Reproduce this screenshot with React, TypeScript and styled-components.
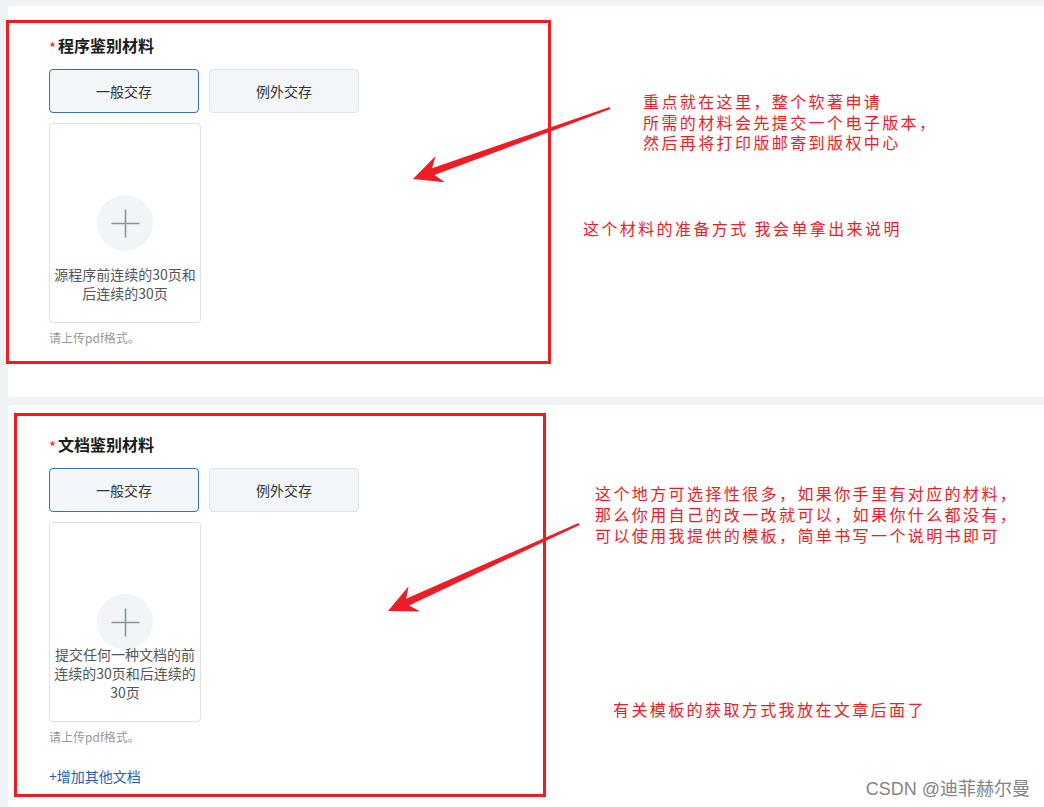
import styled, { createGlobalStyle } from "styled-components"

const RED = "#ee1c25"

const GlobalStyle = createGlobalStyle`
  html, body {
    margin: 0;
    padding: 0;
  }
  body {
    background: #f0f3f6;
    font-family: "Noto Sans CJK SC", "Noto Sans", sans-serif;
  }
  * {
    box-sizing: border-box;
  }
`

type Point = [number, number]

// tapered "screenshot tool" arrow, from tail to tip
const arrowPoints = (tail: Point, tip: Point) => {
  const dx = tip[0] - tail[0]
  const dy = tip[1] - tail[1]
  const len = Math.hypot(dx, dy)
  const d: Point = [dx / len, dy / len]
  const n: Point = [-d[1], d[0]]
  const at = (back: number, side: number): Point => [
    tip[0] - back * d[0] + side * n[0],
    tip[1] - back * d[1] + side * n[1],
  ]
  const pts: Point[] = [
    [tail[0] + 1.2 * n[0], tail[1] + 1.2 * n[1]],
    at(21.5, 3.6),
    at(29, 13.9),
    tip,
    at(29, -13.9),
    at(21.5, -3.6),
    [tail[0] - 1.2 * n[0], tail[1] - 1.2 * n[1]],
  ]
  return pts.map((p) => p.map((v) => v.toFixed(1)).join(",")).join(" ")
}

const App = () => {
  return (
    <>
      <GlobalStyle />
      <Page>
        <Panel $height={391}>
          <Highlight $top={14} $left={-2} $width={545} $height={344} $padTop={11} $padLeft={40}>
            <Field>
              <Title>
                <Required>*</Required>程序鉴别材料
              </Title>
              <Choices>
                <Choice $active>一般交存</Choice>
                <Choice>例外交存</Choice>
              </Choices>
              <Uploader>
                <AddCircle>
                  <PlusIcon />
                </AddCircle>
                <Caption>{"源程序前连续的30页和\n后连续的30页"}</Caption>
              </Uploader>
              <Hint>请上传pdf格式。</Hint>
            </Field>
          </Highlight>
          <Notes>
            <Note $top={85} $left={92} $lineHeight={20.5}>
              {"重点就在这里，整个软著申请\n所需的材料会先提交一个电子版本，\n然后再将打印版邮寄到版权中心"}
            </Note>
            <Note $top={65.5} $left={32} $lineHeight={20.5}>
              这个材料的准备方式 我会单拿出来说明
            </Note>
          </Notes>
        </Panel>

        <Panel $height={402}>
          <Highlight $top={8} $left={6} $width={532} $height={384} $padTop={17} $padLeft={32}>
            <Field>
              <Title>
                <Required>*</Required>文档鉴别材料
              </Title>
              <Choices>
                <Choice $active>一般交存</Choice>
                <Choice>例外交存</Choice>
              </Choices>
              <Uploader>
                <AddCircle>
                  <PlusIcon />
                </AddCircle>
                <Caption>{"提交任何一种文档的前\n连续的30页和后连续的\n30页"}</Caption>
              </Uploader>
              <Hint>请上传pdf格式。</Hint>
              <AddLink>+增加其他文档</AddLink>
            </Field>
          </Highlight>
          <Notes>
            <Note $top={77.5} $left={49} $lineHeight={21}>
              {"这个地方可选择性很多，如果你手里有对应的材料，\n那么你用自己的改一改就可以，如果你什么都没有，\n可以使用我提供的模板，简单书写一个说明书即可"}
            </Note>
            <Note $top={153.5} $left={67} $lineHeight={21}>
              有关模板的获取方式我放在文章后面了
            </Note>
          </Notes>
        </Panel>

        <Arrows viewBox="0 0 1044 807" width={1044} height={807}>
          <polygon points={arrowPoints([610, 108], [413, 179])} fill={RED} />
          <polygon points={arrowPoints([579, 524], [388, 611])} fill={RED} />
        </Arrows>

        <Watermark>CSDN @迪菲赫尔曼</Watermark>
      </Page>
    </>
  )
}

const PlusIcon = () => (
  <svg width="29" height="29" viewBox="0 0 29 29">
    <path d="M14.5 0.5v28M0.5 14.5h28" stroke="#8794a8" strokeWidth="1.6" fill="none" />
  </svg>
)

const Page = styled.div`
  position: relative;
  display: flex;
  flex-direction: column;
  gap: 8px;
  width: 1044px;
  height: 807px;
  padding: 6px 0 0 8px;
  overflow: hidden;
  background: #f0f3f6;
`

const Panel = styled.section<{ $height: number }>`
  display: flex;
  align-items: flex-start;
  flex-shrink: 0;
  height: ${(p) => p.$height}px;
  background: #fff;
  border-radius: 4px 0 0 4px;
`

const Highlight = styled.div<{
  $top: number
  $left: number
  $width: number
  $height: number
  $padTop: number
  $padLeft: number
}>`
  flex-shrink: 0;
  width: ${(p) => p.$width}px;
  height: ${(p) => p.$height}px;
  margin: ${(p) => p.$top}px 0 0 ${(p) => p.$left}px;
  padding: ${(p) => p.$padTop}px 0 0 ${(p) => p.$padLeft}px;
  border: 3px solid ${RED};
`

const Field = styled.div`
  display: flex;
  flex-direction: column;
  align-items: flex-start;
`

const Title = styled.div`
  display: flex;
  align-items: center;
  height: 22px;
  font-size: 16px;
  font-weight: 700;
  color: #1b1b1b;
`

const Required = styled.span`
  margin: 5px 2px 0 0;
  font-size: 15px;
  font-weight: 400;
  color: #f5222d;
`

const Choices = styled.div`
  display: flex;
  gap: 10px;
  margin-top: 13px;
`

const Choice = styled.button<{ $active?: boolean }>`
  width: 150px;
  height: 44px;
  padding: 0;
  border: 1px solid ${(p) => (p.$active ? "#3b6fb8" : "#dde3e8")};
  border-radius: 4px;
  background: ${(p) => (p.$active ? "#f4f7f9" : "#f3f6f8")};
  font-family: inherit;
  font-size: 14px;
  color: #333;
`

const Uploader = styled.div`
  display: grid;
  grid-template: 1fr / 1fr;
  width: 152px;
  height: 200px;
  margin-top: 10px;
  border: 1px solid #dde2e7;
  border-radius: 4px;
  background: #fff;
`

const AddCircle = styled.div`
  grid-area: 1 / 1;
  place-self: center;
  display: flex;
  align-items: center;
  justify-content: center;
  width: 56px;
  height: 56px;
  border-radius: 50%;
  background: #f2f5f8;
`

const Caption = styled.div`
  grid-area: 1 / 1;
  align-self: end;
  margin-bottom: 19px;
  padding: 0 2px;
  font-size: 14px;
  line-height: 19px;
  color: #555;
  text-align: center;
  white-space: pre-line;
`

const Hint = styled.div`
  margin-top: 6px;
  font-size: 12px;
  line-height: 18px;
  color: #999;
`

const AddLink = styled.a`
  margin-top: 20px;
  font-size: 14px;
  line-height: 20px;
  color: #2a5db0;
  cursor: pointer;
`

const Notes = styled.div`
  display: flex;
  flex-direction: column;
  align-items: flex-start;
`

const Note = styled.div<{ $top: number; $left: number; $lineHeight: number }>`
  margin: ${(p) => p.$top}px 0 0 ${(p) => p.$left}px;
  font-size: 16px;
  line-height: ${(p) => p.$lineHeight}px;
  letter-spacing: 2.4px;
  color: ${RED};
  white-space: pre-line;
`

const Arrows = styled.svg`
  position: absolute;
  top: 0;
  left: 0;
  pointer-events: none;
`

const Watermark = styled.div`
  position: absolute;
  right: 14px;
  bottom: 6px;
  font-family: "Liberation Sans", "Noto Sans CJK SC", sans-serif;
  font-size: 18px;
  line-height: 24px;
  color: #858585;
  text-shadow: 0 0 2px #fff, 0 0 1px #fff;
`

export default App
